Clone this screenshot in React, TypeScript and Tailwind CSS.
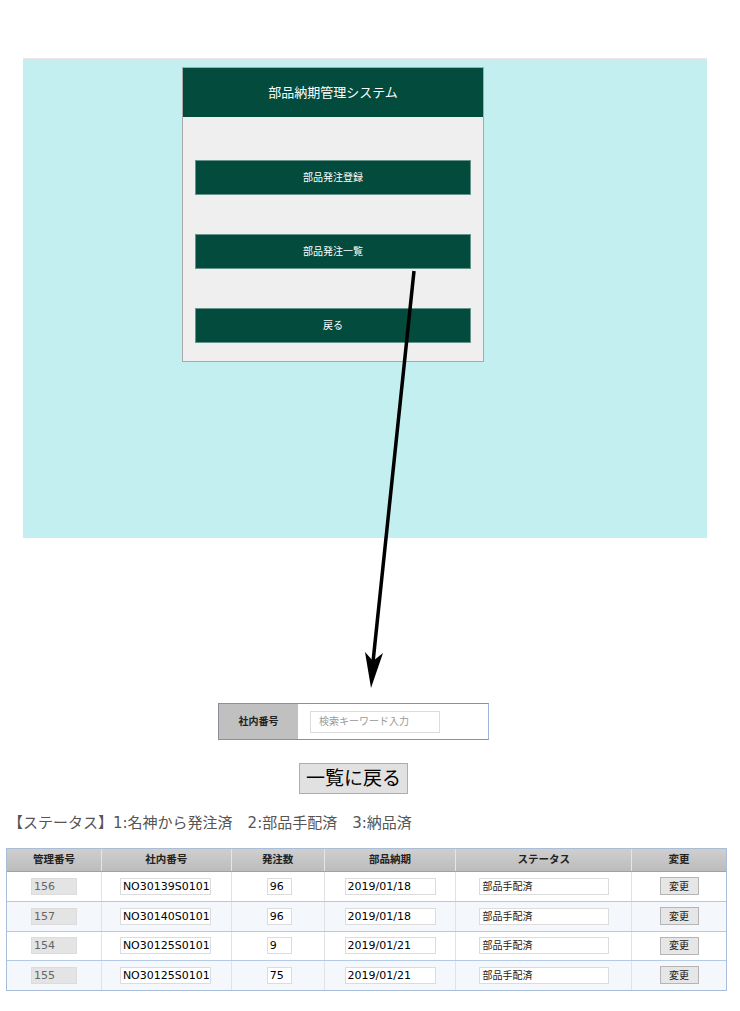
import React from 'react';

const font = { fontFamily: '"DejaVu Sans", "Noto Sans CJK JP", sans-serif' };

const menuItems = ['部品発注登録', '部品発注一覧', '戻る'];

const rows = [
    { id: '156', code: 'NO30139S0101', qty: '96', date: '2019/01/18', status: '部品手配済' },
    { id: '157', code: 'NO30140S0101', qty: '96', date: '2019/01/18', status: '部品手配済' },
    { id: '154', code: 'NO30125S0101', qty: '9', date: '2019/01/21', status: '部品手配済' },
    { id: '155', code: 'NO30125S0101', qty: '75', date: '2019/01/21', status: '部品手配済' },
];

const headers = [
    { label: '管理番号', w: 'w-[94px]' },
    { label: '社内番号', w: 'w-[130px]' },
    { label: '発注数', w: 'w-[93px]' },
    { label: '部品納期', w: 'w-[132px]' },
    { label: 'ステータス', w: 'w-[176px]' },
    { label: '変更', w: 'w-[95px]' },
];

const Field: React.FC<{ value: string; className: string }> = ({ value, className }) => (
    <div className={`h-[17px] border border-[#dcdcdc] leading-[15px] px-[2px] ${className}`}>{value}</div>
);

const MenuPanel: React.FC = () => (
    <div className="ml-[159px] mt-[8px] w-[302px] border border-[#a9a9a9] bg-[#efefef]">
        <div className="h-[49px] bg-[#034b3d] flex items-center justify-center text-white text-[13px]">
            部品納期管理システム
        </div>
        <div className="px-[12px] pt-[43px] pb-[18px] flex flex-col gap-[39px]">
            {menuItems.map(label => (
                <div key={label} className="h-[35px] bg-[#034b3d] border border-white/40 flex items-center justify-center text-white text-[10px]">
                    {label}
                </div>
            ))}
        </div>
    </div>
);

const App: React.FC = () => (
    <div className="relative w-[740px] h-[1011px] bg-white overflow-hidden" style={font}>
        <div className="pt-[58px]">
            <div className="ml-[23px] w-[684px] h-[480px] bg-[#c4eff0] border-t border-[#f0e4e8]">
                <MenuPanel />
            </div>
        </div>

        {/* Search box */}
        <div className="mt-[165px] ml-[218px] w-[271px] h-[37px] flex border border-[#8a8f99] border-r-[#9fb4d6]">
            <div className="w-[79px] bg-[#c0c0c0] flex items-center justify-center text-[10px] font-bold text-[#222]">
                社内番号
            </div>
            <div className="flex-1 bg-white flex items-center pl-[12px]">
                <div className="w-[130px] h-[22px] border border-[#dcdcdc] flex items-center pl-[8px] text-[10px] text-[#999]">
                    検索キーワード入力
                </div>
            </div>
        </div>

        <div className="mt-[23px] ml-[299px] w-[109px] h-[31px] bg-[#e1e1e1] border border-[#adadad] flex items-center justify-center text-[19px] text-black">
            一覧に戻る
        </div>

        <div className="mt-[18px] ml-[8px] text-[15px] text-[#555] whitespace-pre">
            【ステータス】1:名神から発注済　2:部品手配済　3:納品済
        </div>

        {/* Table */}
        <div className="mt-[13px] ml-[6px] w-[721px] border border-[#a9bdd8]">
            <div className="flex h-[23px] bg-gradient-to-b from-[#cfcfcf] to-[#bcbcbc] border-b border-[#8ea4c2]">
                {headers.map((h, i) => (
                    <div key={h.label} className={`${h.w} flex items-center justify-center text-[10.5px] font-bold text-[#222] ${i > 0 ? 'border-l border-[#e6e6e6]' : ''}`}>
                        {h.label}
                    </div>
                ))}
            </div>
            {rows.map((r, i) => (
                <div key={r.id} className={`flex h-[29.5px] ${i % 2 ? 'bg-[#f4f7fc]' : 'bg-white'} ${i > 0 ? 'border-t border-[#b3c9e6]' : ''}`}>
                    <div className="w-[94px] flex items-center pl-[24px]">
                        <Field value={r.id} className="w-[46px] bg-[#e4e4e4] text-[#666] text-[11px]" />
                    </div>
                    <div className="w-[130px] flex items-center pl-[18px] border-l border-[#e2e2e2]">
                        <Field value={r.code} className="w-[91px] bg-white text-black text-[11px]" />
                    </div>
                    <div className="w-[93px] flex items-center pl-[35px] border-l border-[#e2e2e2]">
                        <Field value={r.qty} className="w-[25px] bg-white text-black text-[11px]" />
                    </div>
                    <div className="w-[132px] flex items-center pl-[20px] border-l border-[#e2e2e2]">
                        <Field value={r.date} className="w-[91px] bg-white text-black text-[11px]" />
                    </div>
                    <div className="w-[176px] flex items-center pl-[23px] border-l border-[#e2e2e2]">
                        <Field value={r.status} className="w-[130px] bg-white text-[#222] text-[10px]" />
                    </div>
                    <div className="w-[95px] flex items-center justify-center border-l border-[#e2e2e2]">
                        <div className="w-[39px] h-[18px] bg-[#e6e6e6] border border-[#b5b5b5] flex items-center justify-center text-[10px] text-[#222]">
                            変更
                        </div>
                    </div>
                </div>
            ))}
        </div>

        {/* Arrow overlay */}
        <svg className="absolute left-0 top-0 pointer-events-none" width="740" height="1011">
            <line x1="414" y1="271" x2="373" y2="662" stroke="#000" strokeWidth="3.5" />
            <path d="M365 652 L371 688 L383 653 L373 661 Z" fill="#000" />
        </svg>
    </div>
);

export default App;
